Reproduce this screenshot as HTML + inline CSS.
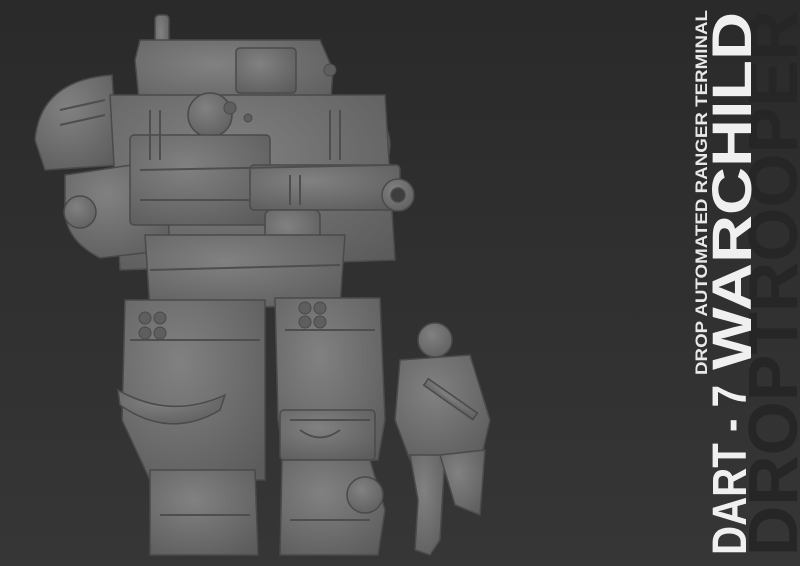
<!DOCTYPE html>
<html><head><style>
html,body{margin:0;padding:0;width:800px;height:566px;overflow:hidden;background:#2e2e2e}
</style></head><body>
<svg width="800" height="566" viewBox="0 0 800 566" xmlns="http://www.w3.org/2000/svg">
<defs>
<linearGradient id="bg" x1="0" y1="0" x2="0" y2="1">
<stop offset="0" stop-color="#2a2a2a"/><stop offset="1" stop-color="#363636"/></linearGradient>
<radialGradient id="m" cx="0.4" cy="0.35" r="0.8">
<stop offset="0" stop-color="#818181"/><stop offset="1" stop-color="#5c5c5c"/></radialGradient>
</defs>
<rect width="800" height="566" fill="url(#bg)"/>
<g font-family="Liberation Sans, sans-serif" font-weight="bold">
<text transform="translate(797,556) rotate(-90)" font-size="70" fill="#262626" textLength="546" lengthAdjust="spacingAndGlyphs">DROPTROOPER</text>
<text transform="translate(707,375) rotate(-90)" font-size="17" fill="#e8e8e8" textLength="365" lengthAdjust="spacingAndGlyphs">DROP AUTOMATED RANGER TERMINAL</text>
<text transform="translate(751,370) rotate(-90)" font-size="56" fill="#f0f0f0" textLength="358" lengthAdjust="spacingAndGlyphs">WARCHILD</text>
<text transform="translate(746,555) rotate(-90)" font-size="48" fill="#f0f0f0" textLength="170" lengthAdjust="spacingAndGlyphs">DART - 7</text>
</g>
<g fill="url(#m)" stroke="#4a4a4a" stroke-width="1.5">
<rect x="155" y="15" width="14" height="50" rx="4"/>
<path d="M135 60 L140 40 L320 40 L333 70 L330 110 L140 110 Z"/>
<path d="M35 140 Q40 80 112 75 L118 165 L45 170 Z"/>
<circle cx="350" cy="145" r="40"/>
<path d="M110 95 L385 95 L395 260 L120 270 Z"/>
<rect x="236" y="48" width="60" height="45" rx="4"/>
<circle cx="210" cy="115" r="22"/>
<path d="M65 175 L165 160 L170 250 L100 258 Q65 240 65 210 Z"/>
<circle cx="80" cy="212" r="16"/>
<rect x="130" y="135" width="140" height="90" rx="4"/>
<rect x="250" y="165" width="150" height="45" rx="4"/>
<circle cx="398" cy="195" r="16"/>
<circle cx="398" cy="195" r="7" fill="#3e3e3e"/>
<rect x="265" y="210" width="55" height="45" rx="6"/>
<path d="M145 235 L345 235 L340 305 L150 310 Z"/>
<path d="M125 300 L265 300 L265 480 L150 480 L122 420 Z"/>
<path d="M118 390 Q170 420 225 395 L220 410 Q170 440 120 405 Z"/>
<path d="M150 470 L255 470 L258 555 L150 555 Z"/>
<path d="M275 298 L380 298 L385 420 L378 460 L285 465 L278 420 Z"/>
<rect x="280" y="410" width="95" height="50" rx="4"/>
<path d="M282 460 L370 460 L385 510 L378 555 L280 555 Z"/>
<circle cx="365" cy="495" r="18"/>
<circle cx="435" cy="340" r="17"/>
<path d="M400 360 L470 355 L490 420 L482 455 L410 460 L395 420 Z"/>
<path d="M410 455 L445 455 L440 540 L430 555 L415 550 L418 500 Z"/>
<path d="M440 455 L485 450 L480 515 L455 505 Z"/>
<rect x="420" y="395" width="60" height="8" transform="rotate(35 450 400)"/>
</g>
<g fill="#5e5e5e" stroke="#4a4a4a">
<circle cx="145" cy="318" r="6"/><circle cx="160" cy="318" r="6"/><circle cx="145" cy="333" r="6"/><circle cx="160" cy="333" r="6"/>
<circle cx="305" cy="308" r="6"/><circle cx="320" cy="308" r="6"/><circle cx="305" cy="322" r="6"/><circle cx="320" cy="322" r="6"/>
<circle cx="230" cy="108" r="6"/><circle cx="248" cy="118" r="4"/><circle cx="330" cy="70" r="6"/>
</g>
<g stroke="#4e4e4e" stroke-width="2" fill="none">
<path d="M140 170 L390 165 M140 200 L250 200 M150 270 L340 265 M130 340 L260 340 M285 330 L375 330 M290 420 L370 420 M160 515 L250 515 M290 520 L370 520"/>
<path d="M150 110 L150 160 M160 110 L160 160 M330 110 L330 160 M340 110 L340 160 M60 110 L105 100 M60 125 L105 115 M290 175 L290 205 M300 175 L300 205"/>
<path d="M300 430 Q320 445 340 430"/>
</g>
</svg>
</body></html>
